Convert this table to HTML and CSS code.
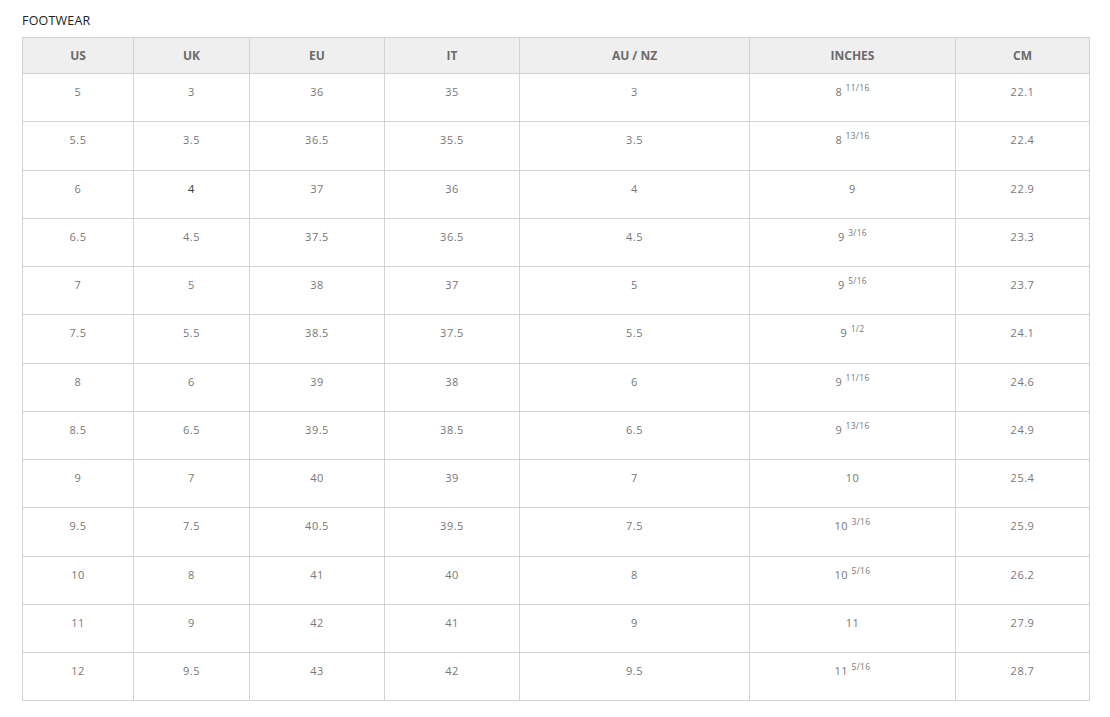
FILE: index.html
```html
<!DOCTYPE html>
<html>
<head>
<meta charset="utf-8">
<link rel="stylesheet" href="styles.css">
</head>
<body>
<div class="page">
  <div class="title">FOOTWEAR</div>
  <table class="sizes">
    <colgroup>
      <col class="c-us"><col class="c-uk"><col class="c-eu"><col class="c-it"><col class="c-au"><col class="c-in"><col class="c-cm">
    </colgroup>
    <thead>
      <tr><th>US</th><th>UK</th><th>EU</th><th>IT</th><th>AU / NZ</th><th>INCHES</th><th>CM</th></tr>
    </thead>
    <tbody>
      <tr><td>5</td><td>3</td><td>36</td><td>35</td><td>3</td><td>8 <sup>11/16</sup></td><td>22.1</td></tr>
      <tr><td>5.5</td><td>3.5</td><td>36.5</td><td>35.5</td><td>3.5</td><td>8 <sup>13/16</sup></td><td>22.4</td></tr>
      <tr><td>6</td><td class="dark">4</td><td>37</td><td>36</td><td>4</td><td>9</td><td>22.9</td></tr>
      <tr><td>6.5</td><td>4.5</td><td>37.5</td><td>36.5</td><td>4.5</td><td>9 <sup>3/16</sup></td><td>23.3</td></tr>
      <tr><td>7</td><td>5</td><td>38</td><td>37</td><td>5</td><td>9 <sup>5/16</sup></td><td>23.7</td></tr>
      <tr><td>7.5</td><td>5.5</td><td>38.5</td><td>37.5</td><td>5.5</td><td>9 <sup>1/2</sup></td><td>24.1</td></tr>
      <tr><td>8</td><td>6</td><td>39</td><td>38</td><td>6</td><td>9 <sup>11/16</sup></td><td>24.6</td></tr>
      <tr><td>8.5</td><td>6.5</td><td>39.5</td><td>38.5</td><td>6.5</td><td>9 <sup>13/16</sup></td><td>24.9</td></tr>
      <tr><td>9</td><td>7</td><td>40</td><td>39</td><td>7</td><td>10</td><td>25.4</td></tr>
      <tr><td>9.5</td><td>7.5</td><td>40.5</td><td>39.5</td><td>7.5</td><td>10 <sup>3/16</sup></td><td>25.9</td></tr>
      <tr><td>10</td><td>8</td><td>41</td><td>40</td><td>8</td><td>10 <sup>5/16</sup></td><td>26.2</td></tr>
      <tr><td>11</td><td>9</td><td>42</td><td>41</td><td>9</td><td>11</td><td>27.9</td></tr>
      <tr><td>12</td><td>9.5</td><td>43</td><td>42</td><td>9.5</td><td>11 <sup>5/16</sup></td><td>28.7</td></tr>
    </tbody>
  </table>
</div>
</body>
</html>
```

FILE: styles.css
```css
html, body {
  margin: 0;
  padding: 0;
  background: #ffffff;
}
.page {
  padding: 13px 20px 0 22px;
  font-family: "Open Sans", "Liberation Sans", sans-serif;
}
.title {
  font-size: 12.5px;
  line-height: 16px;
  color: #222222;
  height: 24px;
  letter-spacing: 0.2px;
}
.sizes {
  border-collapse: collapse;
  table-layout: fixed;
  width: 1067px;
}
.c-us { width: 111px; }
.c-uk { width: 116px; }
.c-eu { width: 135px; }
.c-it { width: 135px; }
.c-au { width: 230px; }
.c-in { width: 206px; }
.c-cm { width: 134px; }
.sizes th,
.sizes td {
  border: 1px solid #d2d2d2;
  text-align: center;
  padding: 0;
}
.sizes th {
  background: #efefef;
  color: #6b6b6b;
  font-weight: 700;
  font-size: 12px;
  height: 35px;
  vertical-align: middle;
}
.sizes td {
  color: #777777;
  font-size: 11px;
  line-height: 16px;
  height: 37.25px;
  padding-top: 10px;
  vertical-align: top;
  letter-spacing: 0.5px;
}
.sizes td.dark {
  color: #2f3d3d;
}
.sizes sup {
  font-size: 8.5px;
  line-height: 0;
  vertical-align: 5px;
  letter-spacing: 0.3px;
}
```
